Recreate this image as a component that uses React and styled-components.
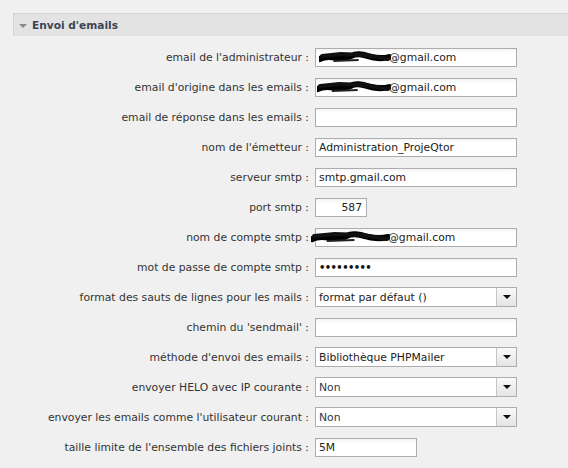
import React from "react";
import styled, { createGlobalStyle } from "styled-components";

const Global = createGlobalStyle`
  html, body { margin: 0; padding: 0; background: #f0f0f0; }
  body { font-family: "DejaVu Sans", Verdana, sans-serif; font-size: 10.8px; color: #333; }
`;

const Page = styled.div`
  padding: 13px 0 0 13px;
  width: 555px;
  height: 455px;
  overflow: hidden;
`;

const Header = styled.div`
  display: flex;
  align-items: center;
  gap: 5px;
  height: 22px;
  padding-left: 5px;
  background: #e3e3e3;
  border-top: 1px solid #d4d4d4;
  border-left: 1px solid #d4d4d4;
  font-weight: bold;
  font-size: 10.6px;
  color: #3b4454;
`;

const Caret = styled.span`
  width: 0;
  height: 0;
  border-left: 4px solid transparent;
  border-right: 4px solid transparent;
  border-top: 4px solid #888;
  margin-top: 1px;
`;

const Form = styled.div`
  display: grid;
  grid-template-columns: 296px auto;
  column-gap: 6px;
  grid-auto-rows: 30px;
  margin-top: 6px;
  align-items: center;
`;

const Label = styled.div`
  text-align: right;
  white-space: nowrap;
  color: #333;
`;

const Input = styled.div`
  position: relative;
  box-sizing: border-box;
  width: ${(p) => p.$w}px;
  height: 19px;
  border: 1px solid #adadad;
  background: linear-gradient(#f4f4f4, #ffffff 4px);
  display: flex;
  align-items: center;
  justify-content: ${(p) => (p.$right ? "flex-end" : "flex-start")};
  padding: 0 ${(p) => (p.$right ? "4px" : "3px")};
  color: #222;
  white-space: nowrap;
`;

const Select = styled.div`
  box-sizing: border-box;
  width: 202px;
  height: 20px;
  border: 1px solid #adadad;
  background: #fff;
  display: flex;
  align-items: stretch;
  color: #222;
`;

const SelectText = styled.div`
  flex: 1;
  display: flex;
  align-items: center;
  padding-left: 3px;
  color: ${(p) => p.$c || "#222"};
`;

const SelectBtn = styled.div`
  width: 19px;
  border-left: 1px solid #c4c4c4;
  background: linear-gradient(#fafafa, #e4e4e4);
  display: flex;
  align-items: center;
  justify-content: center;
  &::after {
    content: "";
    border-left: 4px solid transparent;
    border-right: 4px solid transparent;
    border-top: 4px solid #111;
  }
`;

const Dots = styled.span`
  font-size: 10px;
  letter-spacing: -0.6px;
  font-weight: bold;
  color: #111;
`;

const Scribble = ({ w, offset = 0 }) => (
  <svg width={w} height="15" viewBox={`0 0 ${w} 15`} style={{ marginLeft: offset, marginRight: -2, flex: "none" }}>
    <path
      d={`M1 9 C ${w * 0.15} 3, ${w * 0.3} 12, ${w * 0.45} 6 S ${w * 0.75} 12, ${w - 2} 7`}
      stroke="#000"
      strokeWidth="6"
      fill="none"
      strokeLinecap="round"
    />
    <path d={`M3 6 L ${w * 0.3} 4 L ${w * 0.65} 5 L ${w - 3} 9`} stroke="#111" strokeWidth="4" fill="none" strokeLinecap="round" />
    <path d={`M${w * 0.2} 11 L ${w * 0.55} 10`} stroke="#222" strokeWidth="2" fill="none" />
  </svg>
);

const Email = ({ w, offset }) => (
  <>
    <Scribble w={w} offset={offset} />
    <span>@gmail.com</span>
  </>
);

const rows = [
  ["email de l'administrateur :", <Input $w={202}><Email w={72} /></Input>],
  ["email d'origine dans les emails :", <Input $w={202}><Email w={74} offset={-2} /></Input>],
  ["email de réponse dans les emails :", <Input $w={202} />],
  ["nom de l'émetteur :", <Input $w={202}>Administration_ProjeQtor</Input>],
  ["serveur smtp :", <Input $w={202}>smtp.gmail.com</Input>],
  ["port smtp :", <Input $w={52} $right>587</Input>],
  ["nom de compte smtp :", <Input $w={202}><Email w={79} offset={-8} /></Input>],
  ["mot de passe de compte smtp :", <Input $w={202}><Dots>•••••••••</Dots></Input>],
  ["format des sauts de lignes pour les mails :", <Select><SelectText>format par défaut ()</SelectText><SelectBtn /></Select>],
  ["chemin du 'sendmail' :", <Input $w={202} />],
  ["méthode d'envoi des emails :", <Select><SelectText>Bibliothèque PHPMailer</SelectText><SelectBtn /></Select>],
  ["envoyer HELO avec IP courante :", <Select><SelectText $c="#2a3a4a">Non</SelectText><SelectBtn /></Select>],
  ["envoyer les emails comme l'utilisateur courant :", <Select><SelectText $c="#2a3a4a">Non</SelectText><SelectBtn /></Select>],
  ["taille limite de l'ensemble des fichiers joints :", <Input $w={102}>5M</Input>],
];

export default function App() {
  return (
    <Page>
      <Global />
      <Header>
        <Caret />
        Envoi d'emails
      </Header>
      <Form>
        {rows.map(([l, f], i) => (
          <React.Fragment key={i}>
            <Label>{l}</Label>
            <div>{f}</div>
          </React.Fragment>
        ))}
      </Form>
    </Page>
  );
}
